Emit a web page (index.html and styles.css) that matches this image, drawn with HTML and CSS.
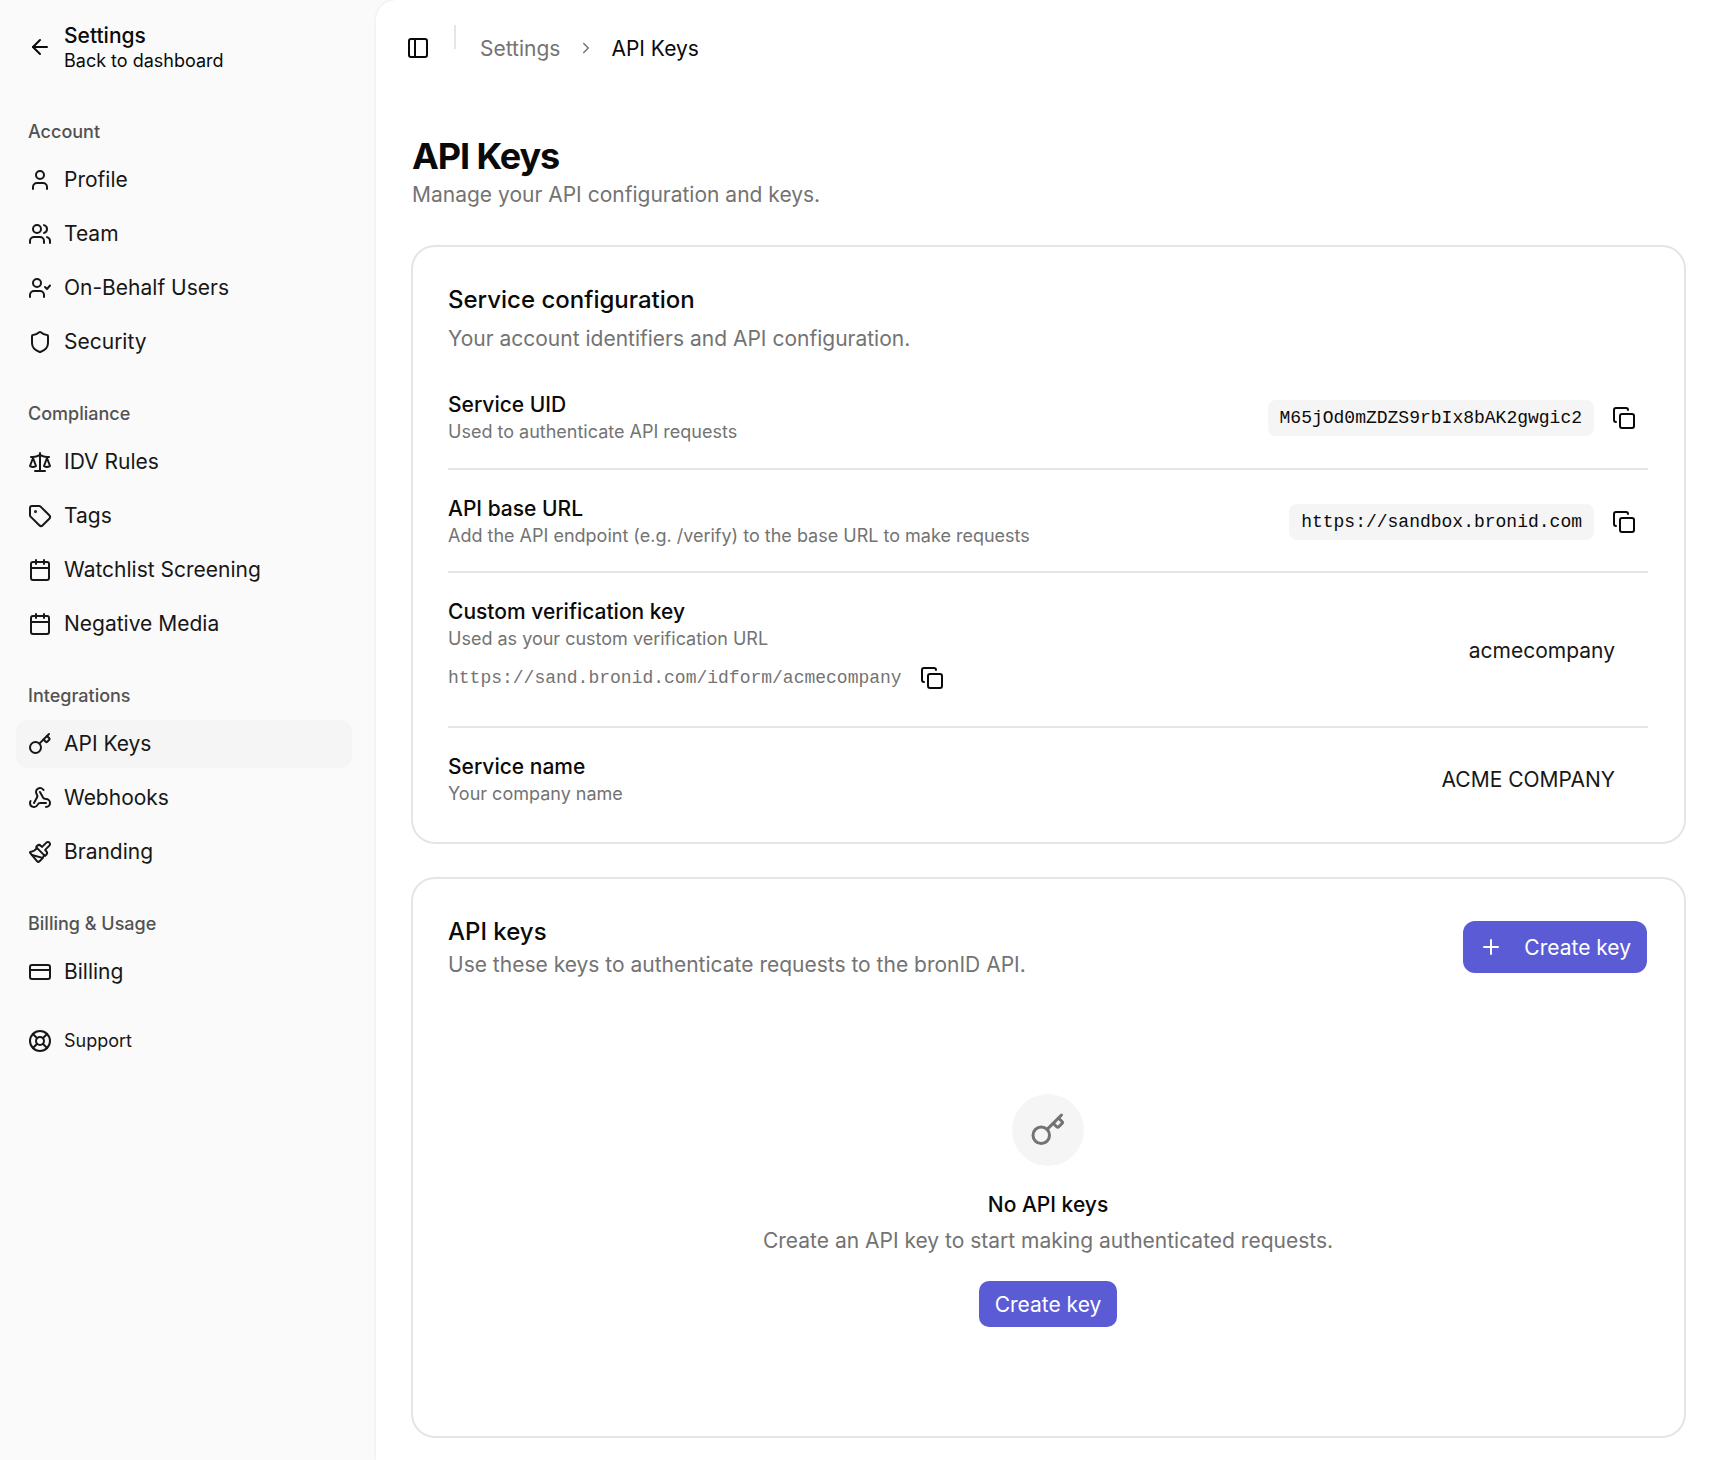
FILE: index.html
```html
<!DOCTYPE html>
<html lang="en">
<head>
    <meta charset="UTF-8">
    <title>API Keys</title>
    <link rel="stylesheet" href="styles.css">
</head>
<body>

    <svg class="sprite" width="0" height="0">
        <symbol id="i-key" viewBox="0 0 24 24"><path d="m15.5 7.5 2.3 2.3a1 1 0 0 0 1.4 0l2.1-2.1a1 1 0 0 0 0-1.4L19 4"/><path d="m21 2-9.6 9.6"/><circle cx="7.5" cy="15.5" r="5.5"/></symbol>
        <symbol id="i-calendar" viewBox="0 0 24 24"><path d="M8 2v4"/><path d="M16 2v4"/><rect width="18" height="18" x="3" y="4" rx="2"/><path d="M3 10h18"/></symbol>
        <symbol id="i-copy" viewBox="0 0 24 24"><rect width="14" height="14" x="8" y="8" rx="2"/><path d="M4 16c-1.1 0-2-.9-2-2V4c0-1.1.9-2 2-2h10c1.1 0 2 .9 2 2"/></symbol>
    </svg>

    <div class="app">
        <!-- Sidebar -->
        <aside class="sidebar">
            <a class="back-link">
                <svg class="icon" viewBox="0 0 24 24"><path d="m12 19-7-7 7-7"/><path d="M19 12H5"/></svg>
                <span>
                    <span class="back-title">Settings</span>
                    <span class="back-sub">Back to dashboard</span>
                </span>
            </a>

            <div class="nav-group">
                <div class="nav-label">Account</div>
                <a class="nav-item"><svg class="icon" viewBox="0 0 24 24"><path d="M19 21v-2a4 4 0 0 0-4-4H9a4 4 0 0 0-4 4v2"/><circle cx="12" cy="7" r="4"/></svg>Profile</a>
                <a class="nav-item"><svg class="icon" viewBox="0 0 24 24"><path d="M16 21v-2a4 4 0 0 0-4-4H6a4 4 0 0 0-4 4v2"/><circle cx="9" cy="7" r="4"/><path d="M22 21v-2a4 4 0 0 0-3-3.87"/><path d="M16 3.13a4 4 0 0 1 0 7.75"/></svg>Team</a>
                <a class="nav-item"><svg class="icon" viewBox="0 0 24 24"><path d="M16 21v-2a4 4 0 0 0-4-4H6a4 4 0 0 0-4 4v2"/><circle cx="9" cy="7" r="4"/><path d="m17 11 2 2 3-3.5"/></svg>On-Behalf Users</a>
                <a class="nav-item"><svg class="icon" viewBox="0 0 24 24"><path d="M20 13c0 5-3.5 7.5-7.66 8.95a1 1 0 0 1-.67-.01C7.5 20.5 4 18 4 13V6a1 1 0 0 1 1-1c2 0 4.5-1.2 6.24-2.72a1.17 1.17 0 0 1 1.52 0C14.51 3.81 17 5 19 5a1 1 0 0 1 1 1z"/></svg>Security</a>
            </div>

            <div class="nav-group">
                <div class="nav-label">Compliance</div>
                <a class="nav-item"><svg class="icon" viewBox="0 0 24 24"><path d="m16 16 3-8 3 8c-.87.65-1.92 1-3 1s-2.13-.35-3-1Z"/><path d="m2 16 3-8 3 8c-.87.65-1.92 1-3 1s-2.13-.35-3-1Z"/><path d="M7 21h10"/><path d="M12 3v18"/><path d="M3 7h2c2 0 5-1 7-2 2 1 5 2 7 2h2"/></svg>IDV Rules</a>
                <a class="nav-item"><svg class="icon" viewBox="0 0 24 24"><path d="M12.586 2.586A2 2 0 0 0 11.172 2H4a2 2 0 0 0-2 2v7.172a2 2 0 0 0 .586 1.414l8.704 8.704a2.426 2.426 0 0 0 3.42 0l6.58-6.58a2.426 2.426 0 0 0 0-3.42z"/><circle cx="7.5" cy="7.5" r=".5" fill="currentColor"/></svg>Tags</a>
                <a class="nav-item"><svg class="icon"><use href="#i-calendar"/></svg>Watchlist Screening</a>
                <a class="nav-item"><svg class="icon"><use href="#i-calendar"/></svg>Negative Media</a>
            </div>

            <div class="nav-group">
                <div class="nav-label">Integrations</div>
                <a class="nav-item active"><svg class="icon"><use href="#i-key"/></svg>API Keys</a>
                <a class="nav-item"><svg class="icon" viewBox="0 0 24 24"><path d="M18 16.98h-5.99c-1.1 0-1.95.94-2.48 1.9A4 4 0 0 1 2 17c.01-.7.2-1.4.57-2"/><path d="m6 17 3.13-5.78c.53-.97.1-2.18-.5-3.1a4 4 0 1 1 6.89-4.06"/><path d="m12 6 3.13 5.73C15.66 12.7 16.9 13 18 13a4 4 0 0 1 0 8"/></svg>Webhooks</a>
                <a class="nav-item"><svg class="icon" viewBox="0 0 24 24"><path d="m14.622 17.897-10.68-2.913"/><path d="M18.376 2.622a1 1 0 1 1 3.002 3.002L17.36 9.643a.5.5 0 0 0 0 .707l.944.944a2.41 2.41 0 0 1 0 3.408l-.944.944a.5.5 0 0 1-.707 0L8.354 7.348a.5.5 0 0 1 0-.707l.944-.944a2.41 2.41 0 0 1 3.408 0l.944.944a.5.5 0 0 0 .707 0z"/><path d="M9 8c-1.804 2.71-3.97 3.46-6.583 3.948a.507.507 0 0 0-.302.819l7.32 8.883a1 1 0 0 0 1.185.204C12.735 20.405 16 16.792 16 15"/></svg>Branding</a>
            </div>

            <div class="nav-group">
                <div class="nav-label">Billing &amp; Usage</div>
                <a class="nav-item"><svg class="icon" viewBox="0 0 24 24"><rect width="20" height="14" x="2" y="5" rx="2"/><path d="M2 10h20"/></svg>Billing</a>
            </div>

            <a class="nav-item support"><svg class="icon" viewBox="0 0 24 24"><circle cx="12" cy="12" r="10"/><path d="m4.93 4.93 4.24 4.24"/><path d="m14.83 9.17 4.24-4.24"/><path d="m14.83 14.83 4.24 4.24"/><path d="m9.17 14.83-4.24 4.24"/><circle cx="12" cy="12" r="4"/></svg>Support</a>
        </aside>

        <!-- Main area -->
        <main class="main">
            <header class="topbar">
                <svg class="icon" viewBox="0 0 24 24"><rect width="18" height="18" x="3" y="3" rx="2"/><path d="M9 3v18"/></svg>
                <span class="topbar-sep"></span>
                <span class="crumb">Settings</span>
                <svg class="crumb-arrow" viewBox="0 0 24 24"><path d="m9 18 6-6-6-6"/></svg>
                <span class="crumb current">API Keys</span>
            </header>

            <h1>API Keys</h1>
            <p class="page-sub">Manage your API configuration and keys.</p>

            <section class="card config-card">
                <h2>Service configuration</h2>
                <p class="card-sub">Your account identifiers and API configuration.</p>

                <div class="row first">
                    <div>
                        <div class="row-title">Service UID</div>
                        <div class="row-sub">Used to authenticate API requests</div>
                    </div>
                    <div class="row-value">
                        <code class="pill">M65jOd0mZDZS9rbIx8bAK2gwgic2</code>
                        <span class="copy-btn"><svg class="icon"><use href="#i-copy"/></svg></span>
                    </div>
                </div>

                <div class="row">
                    <div>
                        <div class="row-title">API base URL</div>
                        <div class="row-sub">Add the API endpoint (e.g. /verify) to the base URL to make requests</div>
                    </div>
                    <div class="row-value">
                        <code class="pill">https://sandbox.bronid.com</code>
                        <span class="copy-btn"><svg class="icon"><use href="#i-copy"/></svg></span>
                    </div>
                </div>

                <div class="row">
                    <div>
                        <div class="row-title">Custom verification key</div>
                        <div class="row-sub">Used as your custom verification URL</div>
                        <div class="row-url">
                            <code>https://sand.bronid.com/idform/acmecompany</code>
                            <svg class="icon"><use href="#i-copy"/></svg>
                        </div>
                    </div>
                    <div class="row-text">acmecompany</div>
                </div>

                <div class="row last">
                    <div>
                        <div class="row-title">Service name</div>
                        <div class="row-sub">Your company name</div>
                    </div>
                    <div class="row-text">ACME COMPANY</div>
                </div>
            </section>

            <section class="card keys-card">
                <div class="keys-head">
                    <div>
                        <h2>API keys</h2>
                        <p class="card-sub tight">Use these keys to authenticate requests to the bronID API.</p>
                    </div>
                    <button class="btn btn-large">
                        <svg class="icon" viewBox="0 0 24 24"><path d="M5 12h14"/><path d="M12 5v14"/></svg>
                        Create key
                    </button>
                </div>

                <div class="empty">
                    <div class="empty-icon"><svg class="icon"><use href="#i-key"/></svg></div>
                    <div class="empty-title">No API keys</div>
                    <p class="empty-sub">Create an API key to start making authenticated requests.</p>
                    <button class="btn">Create key</button>
                </div>
            </section>
        </main>
    </div>

</body>
</html>
```

FILE: styles.css
```css
/* General Reset */
* {
    margin: 0;
    padding: 0;
    box-sizing: border-box;
}

body {
    background-color: #fafafa;
    color: #0a0a0a;
    font-family: Inter, "Noto Sans", sans-serif;
    font-size: 21px;
    overflow: hidden;
}

.sprite {
    position: absolute;
}

.icon {
    width: 24px;
    height: 24px;
    flex-shrink: 0;
    fill: none;
    stroke: currentColor;
    stroke-width: 2;
    stroke-linecap: round;
    stroke-linejoin: round;
}

symbol {
    overflow: visible;
}

.app {
    display: flex;
    height: 1460px;
}

/* Sidebar */
.sidebar {
    width: 376px;
    flex-shrink: 0;
    padding: 22px 24px 0 16px;
}

.back-link {
    display: flex;
    align-items: center;
    gap: 12px;
    padding-left: 12px;
    height: 50px;
    margin-bottom: 42px;
}

.back-title {
    display: block;
    font-size: 21px;
    font-weight: 500;
    line-height: 28px;
}

.back-sub {
    display: block;
    font-size: 18px;
    line-height: 22px;
}

.nav-group {
    display: flex;
    flex-direction: column;
    gap: 6px;
    margin-bottom: 30px;
}

.nav-label {
    height: 36px;
    line-height: 36px;
    padding-left: 12px;
    font-size: 18px;
    font-weight: 500;
    color: #525252;
}

.nav-item {
    display: flex;
    align-items: center;
    gap: 12px;
    height: 48px;
    padding-left: 12px;
    padding-bottom: 1px;
    border-radius: 12px;
    font-size: 21px;
    color: #171717;
}

.nav-item.active {
    background-color: #f5f5f5;
}

.support {
    font-size: 18px;
    margin-top: -9px;
}

/* Main area */
.main {
    flex: 1;
    min-width: 0;
    padding: 0 24px 0 35px;
    background-color: #ffffff;
    border-top-left-radius: 20px;
    box-shadow: 0 0 3px rgba(0, 0, 0, 0.1);
}

.topbar {
    display: flex;
    align-items: center;
    height: 96px;
}

.topbar > .icon {
    margin-left: -5px;
}

.topbar-sep {
    width: 2px;
    height: 24px;
    margin: -22px 24px 0 24px;
    background-color: #e5e5e5;
}

.crumb {
    font-size: 21px;
    color: #737373;
}

.crumb.current {
    color: #0a0a0a;
}

.crumb-arrow {
    width: 18px;
    height: 18px;
    margin: 0 16px 0 17px;
    fill: none;
    stroke: #737373;
    stroke-width: 2;
    stroke-linecap: round;
    stroke-linejoin: round;
}

h1 {
    font-size: 36px;
    font-weight: 700;
    line-height: 44px;
    letter-spacing: -1.1px;
    margin-top: 38px;
    margin-left: 1px;
}

.page-sub {
    font-size: 21px;
    line-height: 28px;
    color: #737373;
    margin-left: 1px;
    margin-top: 3px;
}

/* Cards */
.card {
    border: 2px solid #e5e5e5;
    border-radius: 24px;
    padding: 36px 36px 0 35px;
    background-color: #ffffff;
}

.config-card {
    height: 599px;
    margin-top: 36px;
    padding-top: 38px;
}

.keys-card {
    height: 561px;
    margin-top: 33px;
}

h2 {
    font-size: 24px;
    font-weight: 470;
    line-height: 30px;
}

.card-sub {
    font-size: 21px;
    line-height: 28px;
    color: #737373;
    margin-top: 10px;
}

.card-sub.tight {
    margin-top: 4px;
}

/* Rows inside service configuration */
.row {
    display: flex;
    justify-content: space-between;
    align-items: center;
    padding: 24px 0 22px;
    border-top: 2px solid #e5e5e5;
}

.row.first {
    border-top: none;
    padding: 37px 0 23px;
}

.row-title {
    font-size: 21px;
    font-weight: 470;
    line-height: 30px;
}

.row-sub {
    font-size: 18px;
    line-height: 26px;
    margin-top: -1px;
    color: #737373;
}

.row-value {
    display: flex;
    align-items: center;
    gap: 6px;
}

.pill {
    font-family: "Liberation Mono", monospace;
    font-size: 18px;
    line-height: 36px;
    padding: 0 12px;
    background-color: #f5f5f5;
    border-radius: 8px;
    color: #0a0a0a;
}

.copy-btn {
    display: flex;
    align-items: center;
    justify-content: center;
    width: 48px;
    height: 36px;
}

.row-url {
    display: flex;
    align-items: center;
    gap: 18px;
    margin-top: 11px;
    margin-bottom: 11px;
    height: 30px;
}

.row-url code {
    font-family: "Liberation Mono", monospace;
    font-size: 18px;
    color: #737373;
}

.row-text {
    font-size: 21px;
    padding-right: 33px;
    color: #171717;
}

/* API keys card */
.keys-head {
    display: flex;
    justify-content: space-between;
    align-items: flex-start;
}

.keys-head h2 {
    margin-top: 2px;
}

.btn {
    display: inline-flex;
    align-items: center;
    justify-content: center;
    height: 46px;
    padding: 0 16px;
    background-color: #5b5bd6;
    color: #ffffff;
    border: none;
    border-radius: 10px;
    font-family: inherit;
    font-size: 21px;
}

.btn-large {
    height: 52px;
    margin-top: 6px;
    margin-right: 1px;
    gap: 21px;
    padding: 0 16px;
    border-radius: 12px;
}

.empty {
    display: flex;
    flex-direction: column;
    align-items: center;
    margin-top: 115px;
}

.empty-icon {
    display: flex;
    align-items: center;
    justify-content: center;
    width: 72px;
    height: 72px;
    border-radius: 50%;
    background-color: #f5f5f5;
    color: #737373;
}

.empty-icon .icon {
    width: 36px;
    height: 36px;
}

.empty-title {
    font-size: 21px;
    font-weight: 470;
    line-height: 30px;
    margin-top: 24px;
}

.empty-sub {
    font-size: 21px;
    line-height: 28px;
    color: #737373;
    margin-top: 7px;
    margin-bottom: 26px;
}
```
